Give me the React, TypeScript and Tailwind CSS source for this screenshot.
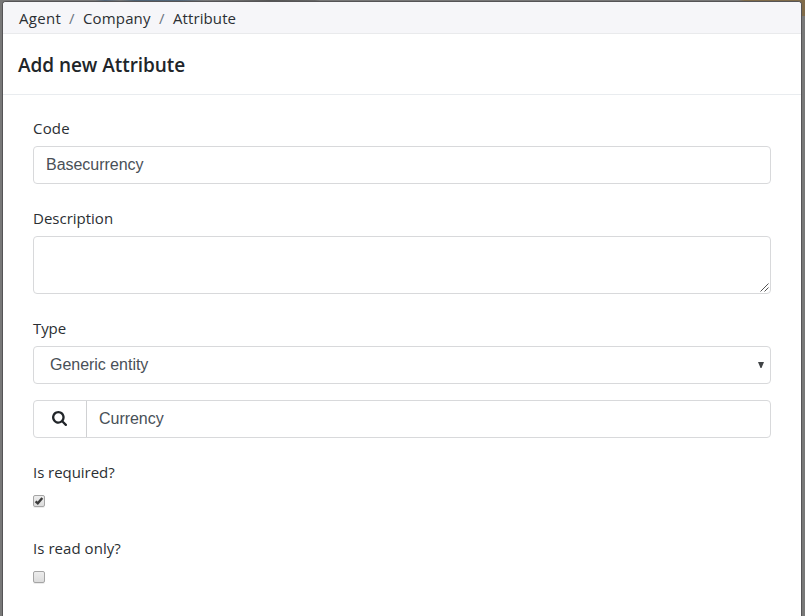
import type { ReactNode } from "react";

const ui = "font-['Open_Sans','Noto_Sans',sans-serif]";
const field = "font-['Liberation_Sans',Arial,sans-serif] text-[16px] tracking-[-0.03px] text-[#495057]";

function Label({ children, className }: { children: ReactNode; className: string }) {
  return (
    <label className={`block h-6 whitespace-nowrap text-[15px] leading-6 text-[#2b2f33] ${className}`}>
      {children}
    </label>
  );
}

function SearchIcon() {
  return (
    <svg width="15" height="15" viewBox="0 0 1664 1664" fill="#212529">
      <path d="M1152 704q0-185-131.500-316.500t-316.500-131.500-316.500 131.500-131.500 316.500 131.500 316.500 316.500 131.500 316.500-131.500 131.500-316.500zm512 832q0 52-38 90t-90 38q-54 0-90-38l-343-342q-179 124-399 124-143 0-273.500-55.500t-225-150-150-225-55.500-273.500 55.500-273.500 150-225 225-150 273.500-55.500 273.500 55.500 225 150 150 225 55.500 273.500q0 220-124 399l343 343q37 37 37 90z" />
    </svg>
  );
}

function Checkbox({ checked = false }: { checked?: boolean }) {
  return (
    <span
      role="checkbox"
      aria-checked={checked}
      className="block size-3 rounded-[2px] border border-[#a5a5a5] bg-linear-to-b from-[#ededed] to-[#dcdcdc] shadow-[0_1px_0_#ececec]"
    >
      {checked && (
        <svg width="10" height="10" viewBox="0 0 10 10" fill="none" className="block">
          <path d="M1.600 5.300L3.800 7.300L8.300 2" stroke="#3c3c3c" strokeWidth="2.400" />
        </svg>
      )}
    </span>
  );
}

export default function App() {
  return (
    <div className={`flex h-[616px] w-[805px] flex-col overflow-hidden bg-[linear-gradient(90deg,#777_0,#777_95px,#52667a_105px,#777_120px,#4c6275_135px,#52677a_180px,#777_205px,#6a6a6a_240px,#555_270px,#666_315px,#777_320px,#777_738px,#806b49_745px,#806b49_805px)] bg-[length:805px_16px] bg-no-repeat bg-[#787878] pt-px pl-[2px] ${ui}`}>
      <div className="flex h-[615px] w-[800px] flex-col overflow-hidden rounded-t-[4px] border border-b-0 border-[#555456] bg-white">
        <nav className="flex h-8 shrink-0 items-center border-b border-[#e9eaec] bg-[#f6f6f9] pl-4 pt-px text-[15px] text-[#2b2f33]">
          <span className="w-[50px] tracking-[0.3px]">Agent</span>
          <span className="w-[14px] text-[#6c757d]">/</span>
          <span className="w-[76px] tracking-[0.15px]">Company</span>
          <span className="w-[14px] text-[#6c757d]">/</span>
          <span className="tracking-[0.1px]">Attribute</span>
        </nav>
        <header className="flex h-[61px] shrink-0 items-center border-b border-[#e9ecef] pl-[15px] pt-[2px]">
          <h5 className="whitespace-nowrap text-[19px] font-semibold leading-[30px] tracking-[-0.05px] text-[#212529]">Add new Attribute</h5>
        </header>
        <form className="flex flex-col px-[30px] pt-[21px]">
          <Label className="tracking-[0.2px]">Code</Label>
          <div className={`mt-[6px] flex h-[38px] items-center rounded-[4px] border border-[#d8d9db] px-3 pb-px ${field}`}>Basecurrency</div>
          <Label className="mt-[22px] tracking-[0px]">Description</Label>
          <div className="mt-[6px] flex h-[58px] items-end justify-end rounded-[4px] border border-[#d8d9db]">
            <svg width="10" height="10" viewBox="0 0 10 10" stroke="#555" strokeWidth="1">
              <path d="M0.500 8.500L8.500 0.500M4.500 8.500L8.500 4.500" />
            </svg>
          </div>
          <Label className="mt-[22px] tracking-[-0.1px]">Type</Label>
          <div className={`mt-[6px] flex h-[38px] items-center justify-between rounded-[4px] border border-[#d8d9db] pl-4 pr-[6px] pb-px ${field}`}>
            <span>Generic entity</span>
            <svg width="6" height="6" viewBox="0 0 6 6" fill="#404346">
              <path d="M0 0H6L3.500 6H2.500Z" />
            </svg>
          </div>
          <div className="mt-4 flex h-[38px] rounded-[4px] border border-[#d8d9db]">
            <div className="flex w-[53px] items-center justify-center border-r border-[#d0d1d3] pr-px pb-px">
              <SearchIcon />
            </div>
            <div className={`flex items-center pl-3 pb-px ${field}`}>Currency</div>
          </div>
          <Label className="mt-[22px] mb-[11px] tracking-[-0.05px]">Is required?</Label>
          <Checkbox checked />
          <Label className="mt-[29px] mb-[11px] tracking-[0.05px]">Is read only?</Label>
          <Checkbox />
        </form>
      </div>
    </div>
  );
}
